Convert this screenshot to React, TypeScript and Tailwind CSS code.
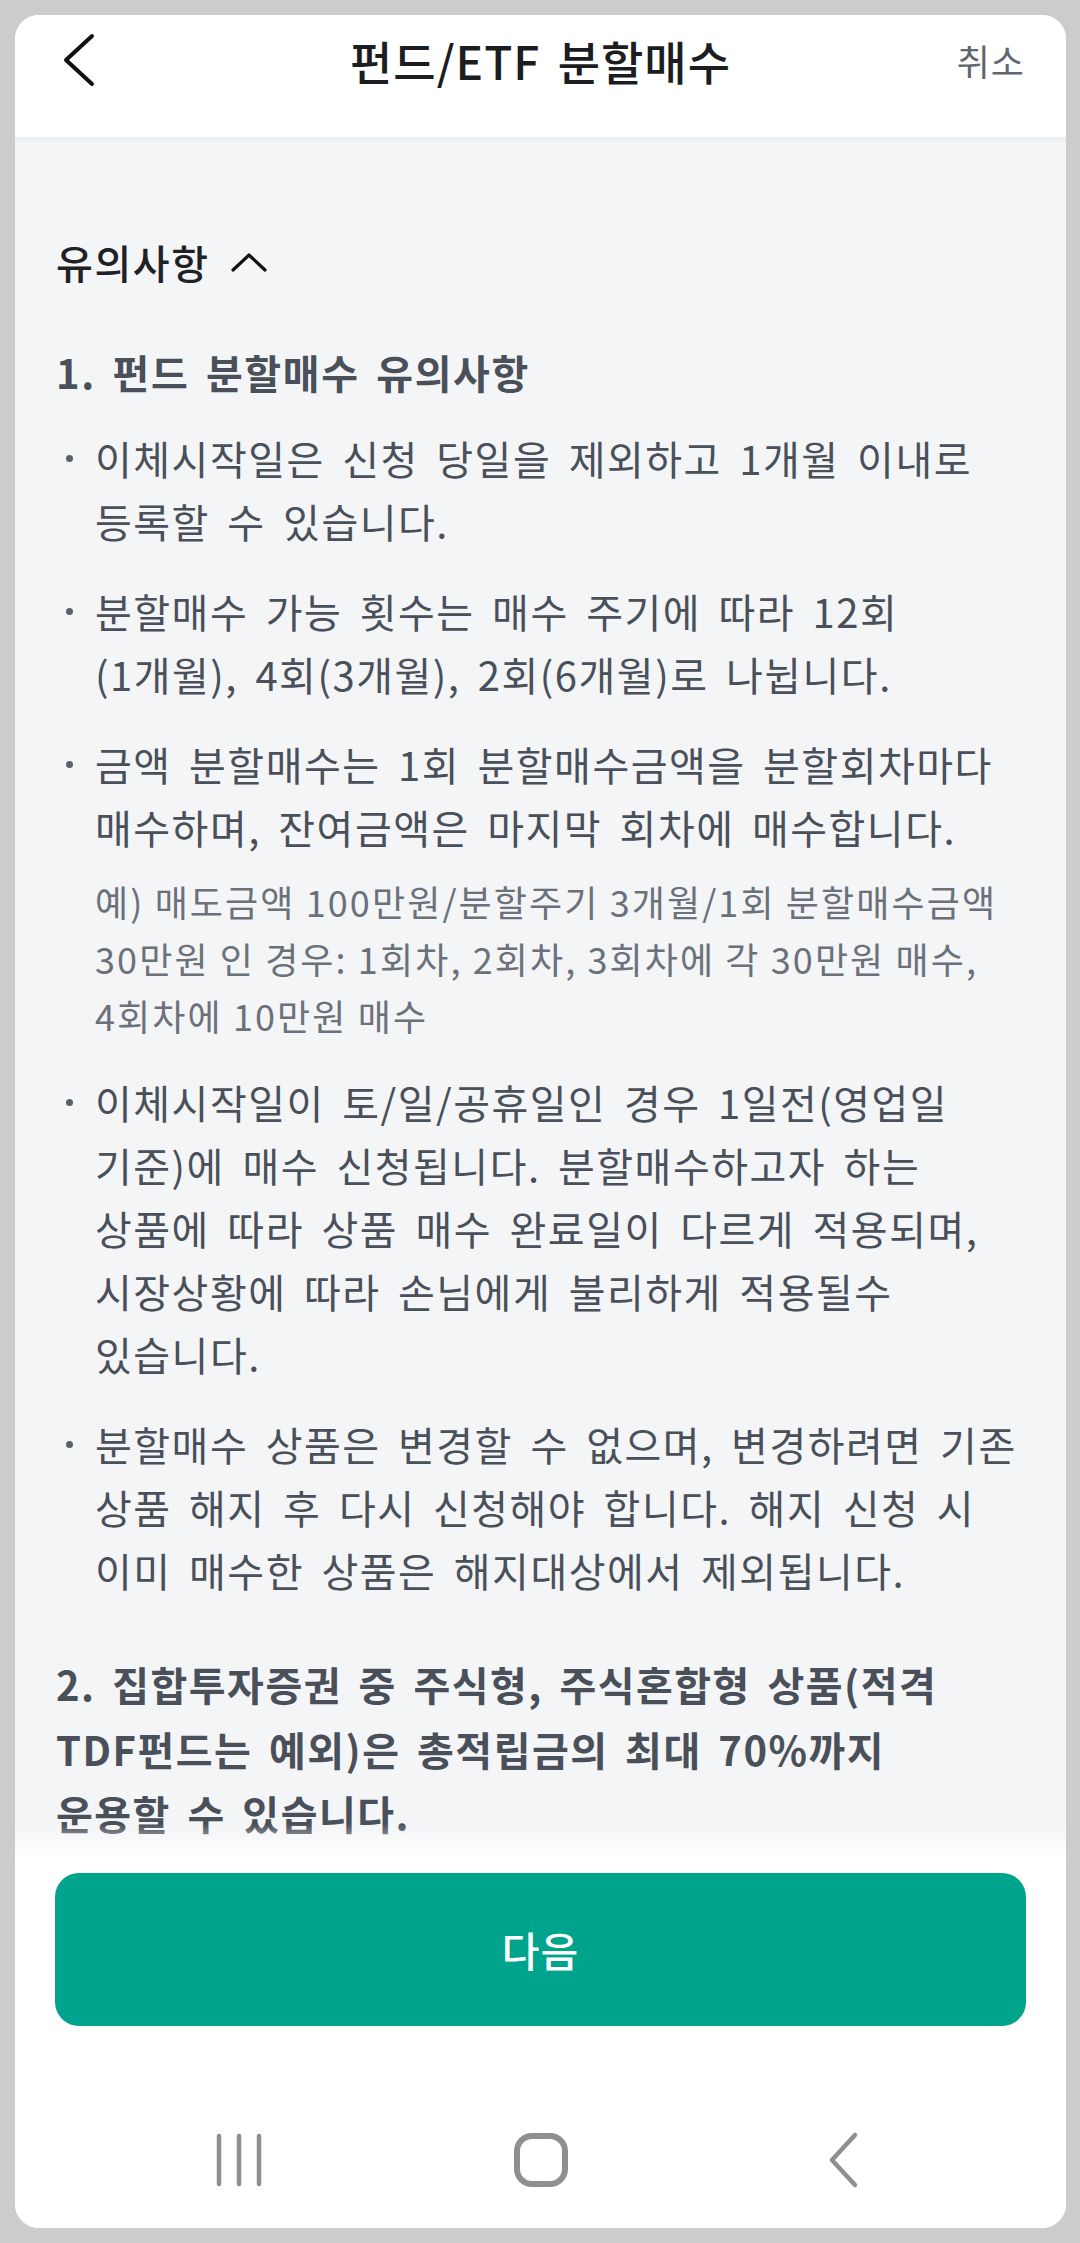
const notes = [
  {
    lines: ["이체시작일은 신청 당일을 제외하고 1개월 이내로", "등록할 수 있습니다."],
  },
  {
    lines: ["분할매수 가능 횟수는 매수 주기에 따라 12회", "(1개월), 4회(3개월), 2회(6개월)로 나뉩니다."],
  },
  {
    lines: ["금액 분할매수는 1회 분할매수금액을 분할회차마다", "매수하며, 잔여금액은 마지막 회차에 매수합니다."],
    example: [
      "예) 매도금액 100만원/분할주기 3개월/1회 분할매수금액",
      "30만원 인 경우: 1회차, 2회차, 3회차에 각 30만원 매수,",
      "4회차에 10만원 매수",
    ],
  },
  {
    lines: [
      "이체시작일이 토/일/공휴일인 경우 1일전(영업일",
      "기준)에 매수 신청됩니다. 분할매수하고자 하는",
      "상품에 따라 상품 매수 완료일이 다르게 적용되며,",
      "시장상황에 따라 손님에게 불리하게 적용될수",
      "있습니다.",
    ],
  },
  {
    lines: [
      "분할매수 상품은 변경할 수 없으며, 변경하려면 기존",
      "상품 해지 후 다시 신청해야 합니다. 해지 신청 시",
      "이미 매수한 상품은 해지대상에서 제외됩니다.",
    ],
  },
];

const section2 = [
  "2. 집합투자증권 중 주식형, 주식혼합형 상품(적격",
  "TDF펀드는 예외)은 총적립금의 최대 70%까지",
  "운용할 수 있습니다.",
];

function NavBar() {
  return (
    <div className="flex h-[136px] items-center justify-center">
      <div className="grid w-[906px] grid-cols-3 items-center justify-items-center">
        <svg width="50" height="56" viewBox="0 0 50 56">
          <g stroke="#8f8f8f" strokeWidth="4.5" strokeLinecap="round">
            <line x1="5" y1="4" x2="5" y2="52" />
            <line x1="25" y1="4" x2="25" y2="52" />
            <line x1="45" y1="4" x2="45" y2="52" />
          </g>
        </svg>
        <svg width="56" height="56" viewBox="0 0 56 56">
          <rect x="4" y="4" width="48" height="48" rx="15" fill="none" stroke="#8f8f8f" strokeWidth="6" />
        </svg>
        <svg width="34" height="58" viewBox="0 0 34 58">
          <path d="M29 4 L6 29 L29 54" fill="none" stroke="#8f8f8f" strokeWidth="4.5" strokeLinecap="round" strokeLinejoin="round" />
        </svg>
      </div>
    </div>
  );
}

export default function App() {
  return (
    <div className="h-[2243px] w-[1080px] overflow-hidden bg-[#cccccc] pt-[15px] font-['Noto_Sans_CJK_KR','Noto_Sans',sans-serif]">
      <div className="ml-[15px] flex h-[2213px] w-[1051px] flex-col overflow-hidden rounded-[24px] bg-white">
        {/* header */}
        <header className="h-[122px] shrink-0 bg-white">
          <div className="grid h-[90px] grid-cols-[160px_1fr_160px] items-center px-[41px]">
            <button className="flex h-[60px] w-[60px] items-center pl-[6px]">
              <svg width="34" height="54" viewBox="0 0 34 54">
                <path d="M30 3 L4 27 L30 51" fill="none" stroke="#111" strokeWidth="4" strokeLinecap="round" strokeLinejoin="round" />
              </svg>
            </button>
            <h1 className="whitespace-nowrap text-center text-[46px] font-medium tracking-[1px] text-[#1b1d21] [word-spacing:6px]">
              펀드/ETF 분할매수
            </h1>
            <button className="justify-self-end text-[36px] tracking-[1px] text-[#5f6670]">취소</button>
          </div>
        </header>
        <div className="h-[6px] shrink-0 bg-gradient-to-b from-[#eaecef] to-[#f1f2f4]" />

        {/* notice body */}
        <main className="relative flex-1 overflow-hidden bg-[#f4f5f7] px-[41px] pt-[91px]">
          <div className="flex h-[56px] items-center gap-[20px] text-[40px] font-medium tracking-[1.6px] text-[#1f2125]">
            <span>유의사항</span>
            <svg width="38" height="22" viewBox="0 0 38 22">
              <path d="M3 19 L19 4 L35 19" fill="none" stroke="#111" strokeWidth="3.2" strokeLinecap="round" strokeLinejoin="round" />
            </svg>
          </div>

          <h2 className="mt-[54px] whitespace-nowrap text-[40px] font-semibold leading-[56px] tracking-[1.6px] text-[#4a5059] [word-spacing:6px]">
            1. 펀드 분할매수 유의사항
          </h2>

          <ul className="mt-[27px] flex flex-col gap-[27px]">
            {notes.map((n, i) => (
              <li key={i} className="flex">
                <div className="flex h-[63px] w-[39px] shrink-0 items-center pl-[10px]">
                  <span className="h-[7px] w-[7px] rounded-full bg-[#5a616b]" />
                </div>
                <div>
                  {n.lines.map((l) => (
                    <p
                      key={l}
                      className="whitespace-nowrap text-[40px] leading-[63px] tracking-[1.5px] text-[#4a5059] [word-spacing:7px]"
                    >
                      {l}
                    </p>
                  ))}
                  {n.example && (
                    <div className="mt-[14px]">
                      {n.example.map((l) => (
                        <p
                          key={l}
                          className="whitespace-nowrap text-[36px] leading-[57px] tracking-[2.1px] text-[#6b717a]"
                        >
                          {l}
                        </p>
                      ))}
                    </div>
                  )}
                </div>
              </li>
            ))}
          </ul>

          <div className="mt-[50px]">
            {section2.map((l) => (
              <p
                key={l}
                className="whitespace-nowrap text-[40px] font-bold leading-[64.5px] tracking-[1.5px] text-[#4a5059] [word-spacing:6px]"
              >
                {l}
              </p>
            ))}
          </div>
        </main>

        {/* bottom action */}
        <footer className="relative shrink-0 bg-white">
          <div className="absolute -top-[36px] left-0 right-0 h-[36px] bg-gradient-to-b from-[#f4f5f7]/0 to-white" />
          <div className="px-[40px] pt-[13px]">
            <button className="flex h-[153px] w-full items-center justify-center rounded-[24px] bg-[#00a48c] text-[41px] font-medium tracking-[1px] text-white">
              다음
            </button>
          </div>
          <div className="h-[66px]" />
          <NavBar />
        </footer>
      </div>
    </div>
  );
}
